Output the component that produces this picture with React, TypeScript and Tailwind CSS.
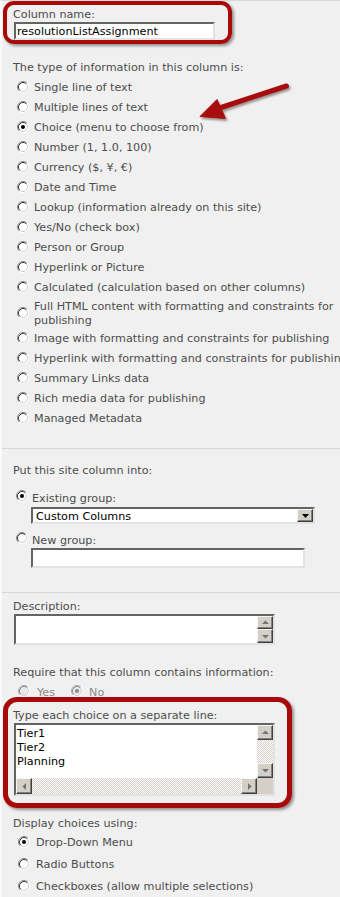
import React from "react";

function Radio({ checked = false, disabled = false }: { checked?: boolean; disabled?: boolean }) {
  return (
    <svg width="12" height="12" viewBox="0 0 12 12" className="block shrink-0">
      <circle cx="6" cy="6" r="4.3" fill={disabled ? "#e8e8e8" : "#ffffff"} />
      <path d="M2.11 9.89 A5.5 5.5 0 0 1 9.89 2.11" fill="none" stroke={disabled ? "#a8a8a8" : "#8a8a8a"} strokeWidth="1" />
      <path d="M9.89 2.11 A5.5 5.5 0 0 1 2.11 9.89" fill="none" stroke="#ffffff" strokeWidth="1" />
      <path d="M2.82 9.18 A4.5 4.5 0 0 1 9.18 2.82" fill="none" stroke={disabled ? "#8a8a8a" : "#3a3a3a"} strokeWidth="1" />
      <path d="M9.18 2.82 A4.5 4.5 0 0 1 2.82 9.18" fill="none" stroke="#d4d0c8" strokeWidth="1" />
      {checked && <circle cx="6" cy="6" r="2" fill={disabled ? "#8a8a8a" : "#000000"} />}
    </svg>
  );
}

function SBtn({ dir, className }: { dir: "up" | "down" | "left" | "right"; className: string }) {
  return (
    <div
      className={`bg-[#d4d0c8] border border-t-[#f6f6f6] border-l-[#f6f6f6] border-r-[#404040] border-b-[#404040] shadow-[inset_-1px_-1px_0_#808080] flex items-center justify-center shrink-0 ${className}`}
    >
      <svg width="7" height="7" viewBox="0 0 7 7" className="block">
        {dir === "up" && <path d="M0 5 L3.5 1.5 L7 5 Z" fill="#727272" />}
        {dir === "down" && <path d="M0 2 L3.5 5.5 L7 2 Z" fill="#727272" />}
        {dir === "left" && <path d="M5 0 L1.5 3.5 L5 7 Z" fill="#727272" />}
        {dir === "right" && <path d="M2 0 L5.5 3.5 L2 7 Z" fill="#727272" />}
      </svg>
    </div>
  );
}

const types = [
  "Single line of text",
  "Multiple lines of text",
  "Choice (menu to choose from)",
  "Number (1, 1.0, 100)",
  "Currency ($, ¥, €)",
  "Date and Time",
  "Lookup (information already on this site)",
  "Yes/No (check box)",
  "Person or Group",
  "Hyperlink or Picture",
  "Calculated (calculation based on other columns)",
  "FULL",
  "Image with formatting and constraints for publishing",
  "Hyperlink with formatting and constraints for publishing",
  "Summary Links data",
  "Rich media data for publishing",
  "Managed Metadata",
];

const inset =
  "border-2 border-t-[#646464] border-l-[#646464] border-r-[#e2e2e2] border-b-[#e2e2e2] bg-white";

const checker =
  "bg-[image:repeating-conic-gradient(#d4d0c8_0%_25%,#ffffff_0%_50%)] bg-[length:2px_2px]";

export default function App() {
  return (
    <div className="relative w-[340px] h-[897px] overflow-hidden bg-[#f0f0f0] border-t border-[#d9d9d9] border-l-2 border-l-[#fafafa] text-[11.2px] text-[#4d4d4d] font-['DejaVu_Sans',Verdana,sans-serif]">
      {/* Section 1 */}
      <div className="h-[448px] pl-[11px] pt-[7px] border-b border-[#d6d6d6]">
        <div className="leading-[14px]">Column name:</div>
        <div className={`ml-px w-[201px] h-[18px] ${inset} text-black leading-[14px] pl-px flex items-center whitespace-nowrap`}>
          <span className="pt-[2px]">resolutionListAssignment</span>
        </div>
        <div className="mt-[21px] leading-[14px]">The type of information in this column is:</div>
        <div className="mt-[2px] flex flex-col">
          {types.map((t) =>
            t === "FULL" ? (
              <div key={t} className="h-[31px] flex items-center pl-[4px] gap-[5px] whitespace-nowrap">
                <Radio />
                <span className="leading-[14px] pt-[2px]">
                  Full HTML content with formatting and constraints for
                  <br />
                  publishing
                </span>
              </div>
            ) : (
              <div key={t} className="h-[20px] flex items-center pl-[4px] gap-[5px] whitespace-nowrap">
                <Radio checked={t.startsWith("Choice")} />
                <span className="leading-[14px] pt-[2px]">{t}</span>
              </div>
            )
          )}
        </div>
      </div>

      {/* Section 2 */}
      <div className="h-[144px] pl-[11px] pt-[15px] border-b border-[#d6d6d6]">
        <div className="leading-[14px]">Put this site column into:</div>
        <div className="mt-[13px] flex items-start pl-[3px] gap-[4px] leading-[14px]">
          <div className="-mt-[1px]">
            <Radio checked />
          </div>
          <span className="pt-px">Existing group:</span>
        </div>
        <div className={`mt-[1px] ml-[18px] w-[284px] h-[17px] ${inset} flex items-center justify-between text-black`}>
          <span className="pl-[3px] leading-[13px] pt-px">Custom Columns</span>
          <div className="w-[16px] h-[13px] bg-[#d4d0c8] border border-t-[#f6f6f6] border-l-[#f6f6f6] border-r-[#404040] border-b-[#404040] shadow-[inset_-1px_-1px_0_#808080] flex items-center justify-center">
            <svg width="7" height="4" viewBox="0 0 7 4" className="block">
              <path d="M0 0 L3.5 4 L7 0 Z" fill="#000" />
            </svg>
          </div>
        </div>
        <div className="mt-[9px] flex items-start pl-[3px] gap-[4px] leading-[14px]">
          <div className="-mt-px">
            <Radio />
          </div>
          <span className="pt-px">New group:</span>
        </div>
        <div className={`ml-[18px] w-[274px] h-[20px] ${inset}`} />
      </div>

      {/* Section 3 + 4 */}
      <div className="pl-[11px] pt-[7px]">
        <div className="leading-[14px]">Description:</div>
        <div className={`ml-px w-[261px] h-[31px] ${inset} flex`}>
          <div className="flex-1" />
          <div className="w-[16px] flex flex-col">
            <SBtn dir="up" className="h-[13px]" />
            <SBtn dir="down" className="h-[14px]" />
          </div>
        </div>
        <div className="mt-[21px] leading-[14px]">Require that this column contains information:</div>
        <div className="mt-[4px] h-[14px] flex items-center pl-[5px] leading-[14px] text-[#8a8a8a]">
          <Radio disabled />
          <span className="ml-[7px] pt-[3px]">Yes</span>
          <div className="ml-[16px]">
            <Radio disabled checked />
          </div>
          <span className="ml-[6px] pt-[3px]">No</span>
        </div>
        <div className="mt-[11px] leading-[14px]">Type each choice on a separate line:</div>
        <div className={`ml-px w-[261px] h-[73px] ${inset} grid grid-cols-[1fr_16px] grid-rows-[1fr_16px]`}>
          <div className="pl-px pt-[2px] text-black leading-[14px]">
            <div>Tier1</div>
            <div>Tier2</div>
            <div>Planning</div>
          </div>
          <div className="flex flex-col">
            <SBtn dir="up" className="h-[15px]" />
            <div className={`flex-1 ${checker}`} />
            <SBtn dir="down" className="h-[15px]" />
          </div>
          <div className="flex">
            <SBtn dir="left" className="w-[16px]" />
            <div className={`flex-1 ${checker}`} />
            <SBtn dir="right" className="w-[16px]" />
          </div>
          <div className="bg-[#d4d0c8]" />
        </div>
        <div className="mt-[21px] leading-[14px]">Display choices using:</div>
        <div className="flex flex-col">
          {[
            ["Drop-Down Menu", true],
            ["Radio Buttons", false],
            ["Checkboxes (allow multiple selections)", false],
          ].map(([label, c]) => (
            <div key={label as string} className="h-[22px] flex items-center pl-[5px] gap-[6px] whitespace-nowrap leading-[14px]">
              <Radio checked={c as boolean} />
              <span className="pt-[2px]">{label as string}</span>
            </div>
          ))}
        </div>
      </div>

      {/* Annotations */}
      <div className="absolute left-[1px] top-0 w-[229px] h-[43px] border-[4px] border-[#a80a0a] rounded-[11px] shadow-[2px_2px_3px_rgba(0,0,0,0.4)] pointer-events-none" />
      <div className="absolute left-[1px] top-[696px] w-[289px] h-[111px] border-[5px] border-[#a80a0a] rounded-[14px] shadow-[2px_2px_3px_rgba(0,0,0,0.4)] pointer-events-none" />
      <svg
        className="absolute left-[183px] top-[77px] pointer-events-none"
        width="115"
        height="52"
        viewBox="185 78 115 52"
      >
        <defs>
          <filter id="arrowShadow" x="-20%" y="-30%" width="150%" height="170%">
            <feDropShadow dx="1.5" dy="2" stdDeviation="1.2" floodColor="#000" floodOpacity="0.4" />
          </filter>
        </defs>
        <g filter="url(#arrowShadow)">
          <line x1="286.5" y1="86" x2="218" y2="108.5" stroke="#a80a0a" strokeWidth="5" strokeLinecap="round" />
          <path d="M200 116.5 L217 99.5 L225.5 118.5 Z" fill="#a80a0a" stroke="#a80a0a" strokeWidth="1" strokeLinejoin="round" />
        </g>
      </svg>
    </div>
  );
}
